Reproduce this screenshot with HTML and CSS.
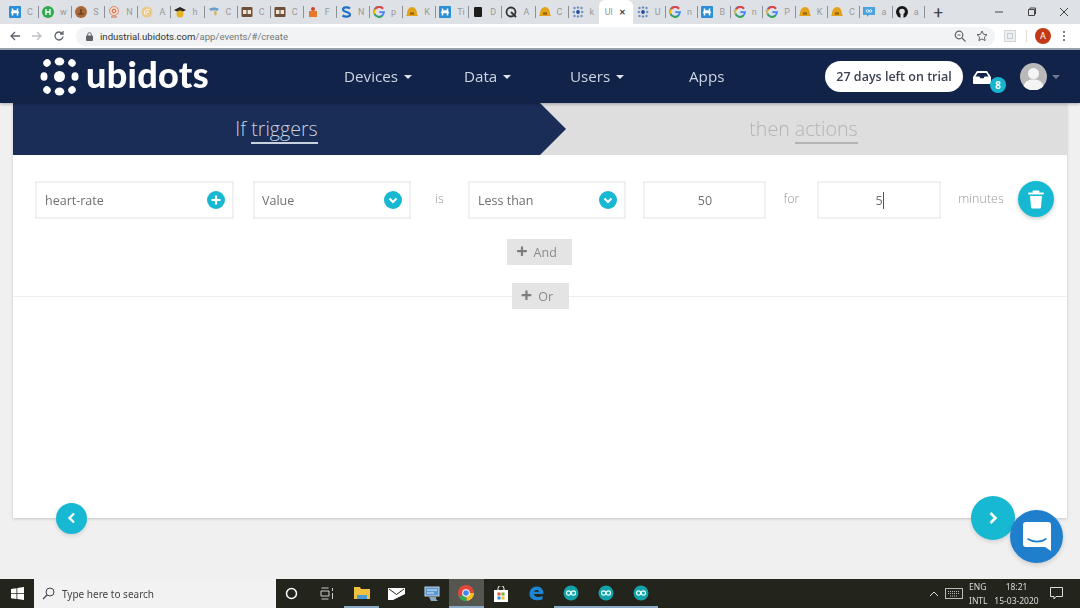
FILE: index.html
```html
<!DOCTYPE html>
<html lang="en">
<head>
<meta charset="utf-8">
<title>Ubidots</title>
<link rel="stylesheet" href="styles.css">
</head>
<body>
<svg class="defs" width="0" height="0">
  <symbol id="hack" viewBox="0 0 12 12"><rect width="12" height="12" rx="1" fill="#2b8fd6"/><path d="M3.5 2.5v7M8.5 2.5v7M2 6.5h8M3.5 5h5" stroke="#fff" stroke-width="1.5" fill="none"/></symbol>
  <symbol id="goog" viewBox="0 0 12 12"><path d="M10 2.6A5 5 0 1 0 11 6.2H6.3" fill="none" stroke="#4285f4" stroke-width="1.8"/><path d="M2.2 3.2A5 5 0 0 1 10 2.6" fill="none" stroke="#ea4335" stroke-width="1.8"/><path d="M1.6 8A5 5 0 0 1 2.2 3.2" fill="none" stroke="#fbbc05" stroke-width="1.8"/><path d="M9.4 9.8A5 5 0 0 1 1.6 8" fill="none" stroke="#34a853" stroke-width="1.8"/></symbol>
  <symbol id="cc" viewBox="0 0 12 12"><rect x=".5" y="1" width="11" height="10" rx="1" fill="#6e4f3a"/><rect x="2" y="4" width="3.4" height="4" fill="#efe6d8"/><rect x="6.6" y="4" width="3.4" height="4" fill="#efe6d8"/></symbol>
  <symbol id="hat" viewBox="0 0 12 12"><path d="M1 8c0-4 2-7 5-7s5 3 5 7l1 2H0z" fill="#e3a21a"/><path d="M4 6.5h4v2H4z" fill="#8c5a14"/></symbol>
  <symbol id="dots" viewBox="0 0 12 12"><g fill="#6f8fc0"><circle cx="2.5" cy="2" r="1.2"/><circle cx="6" cy="1.5" r="1.2"/><circle cx="9.5" cy="2" r="1.2"/><circle cx="1.8" cy="6" r="1.2"/><circle cx="10.2" cy="6" r="1.2"/><circle cx="2.5" cy="10" r="1.2"/><circle cx="6" cy="10.5" r="1.2"/><circle cx="9.5" cy="10" r="1.2"/></g><circle cx="6" cy="6" r="1.9" fill="#1f4f9e"/></symbol>
  <symbol id="ard" viewBox="0 0 16 16"><circle cx="8" cy="8" r="7.5" fill="#12a3a8"/><circle cx="5.6" cy="8" r="2.1" fill="none" stroke="#e8ffff" stroke-width="1.2"/><circle cx="10.4" cy="8" r="2.1" fill="none" stroke="#e8ffff" stroke-width="1.2"/></symbol>
</svg>

<div class="app">
  <header class="browser">
    <div class="tabs">
      <div class="tab"><svg class="fav"><use href="#hack"/></svg><span>C</span></div>
      <div class="tab"><svg class="fav" viewBox="0 0 12 12"><circle cx="6" cy="6" r="6" fill="#2fa84f"/><path d="M4 3v6M8 3v6M4 6h4" stroke="#fff" stroke-width="1.3"/></svg><span>w</span></div>
      <div class="tab"><svg class="fav" viewBox="0 0 12 12"><circle cx="6" cy="6" r="6" fill="#a8683a"/><path d="M3 8h6M6 3v5" stroke="#5a3418" stroke-width="1.2"/></svg><span>S</span></div>
      <div class="tab"><svg class="fav" viewBox="0 0 12 12"><circle cx="6" cy="5" r="4.5" fill="#f4dccb" stroke="#d98a6a"/><circle cx="6" cy="5" r="1.8" fill="none" stroke="#c9643f"/><path d="M3 11h6" stroke="#d98a6a" stroke-width="1.4"/></svg><span>N</span></div>
      <div class="tab"><svg class="fav" viewBox="0 0 12 12"><circle cx="6" cy="6" r="5.5" fill="#ecc98a"/><path d="M3.5 8.5C3 5 5 3 8.5 3.5M5.5 8.5C5 7 6 5.5 8 5.5" stroke="#fff" fill="none"/></svg><span>A</span></div>
      <div class="tab"><svg class="fav" viewBox="0 0 12 12"><path d="M6 1l6 3-6 3-6-3z" fill="#2a2a22"/><circle cx="6" cy="8" r="3.5" fill="#e6b422"/></svg><span>h</span></div>
      <div class="tab"><svg class="fav" viewBox="0 0 12 12"><path d="M1 3c3-2 7-2 10 0L9 5C7 4 5 4 3 5z" fill="#6aa0c8"/><path d="M6 5c2 0 3 1 3 3l-2 2-1-3z" fill="#d9b46a"/></svg><span>C</span></div>
      <div class="tab"><svg class="fav"><use href="#cc"/></svg><span>C</span></div>
      <div class="tab"><svg class="fav"><use href="#cc"/></svg><span>C</span></div>
      <div class="tab"><svg class="fav" viewBox="0 0 12 12"><path d="M2 5h8v6H2z" fill="#e8782a"/><circle cx="6" cy="3" r="2" fill="#d8402a"/></svg><span>F</span></div>
      <div class="tab"><svg class="fav" viewBox="0 0 12 12"><path d="M10 2.5C8 .8 3 1 3 3.6c0 3 7 1.8 7 4.9C10 11 5 11.300 2.500 9.500" fill="none" stroke="#1f6fc4" stroke-width="2.200"/></svg><span>N</span></div>
      <div class="tab"><svg class="fav"><use href="#goog"/></svg><span>p</span></div>
      <div class="tab"><svg class="fav"><use href="#hat"/></svg><span>K</span></div>
      <div class="tab"><svg class="fav"><use href="#hack"/></svg><span>Ti</span></div>
      <div class="tab"><svg class="fav" viewBox="0 0 12 12"><rect x="2" y="1" width="8" height="10" rx="1" fill="#1d1d1d"/></svg><span>D</span></div>
      <div class="tab"><svg class="fav" viewBox="0 0 12 12"><circle cx="6" cy="6" r="4.500" fill="none" stroke="#333" stroke-width="1.800"/><path d="M6 6l5 5" stroke="#333" stroke-width="1.800"/></svg><span>A</span></div>
      <div class="tab"><svg class="fav"><use href="#hat"/></svg><span>C</span></div>
      <div class="tab"><svg class="fav"><use href="#dots"/></svg><span>k</span></div>
      <div class="tab tab-active"><span>Ul</span><b>✕</b></div>
      <div class="tab tab-late tab-after"><svg class="fav"><use href="#dots"/></svg><span>U</span></div>
      <div class="tab tab-late"><svg class="fav"><use href="#goog"/></svg><span>n</span></div>
      <div class="tab tab-late"><svg class="fav"><use href="#hack"/></svg><span>B</span></div>
      <div class="tab tab-late"><svg class="fav"><use href="#goog"/></svg><span>n</span></div>
      <div class="tab tab-late"><svg class="fav"><use href="#goog"/></svg><span>P</span></div>
      <div class="tab tab-late"><svg class="fav"><use href="#hat"/></svg><span>K</span></div>
      <div class="tab tab-late"><svg class="fav"><use href="#hat"/></svg><span>C</span></div>
      <div class="tab tab-late"><svg class="fav" viewBox="0 0 12 12"><path d="M0 1h12v8H6l-2 2V9H0z" fill="#4aa3df"/><circle cx="4.500" cy="5" r="1.300" fill="none" stroke="#fff" stroke-width=".8"/><circle cx="7.500" cy="5" r="1.300" fill="none" stroke="#fff" stroke-width=".8"/></svg><span>a</span></div>
      <div class="tab tab-late"><svg class="fav" viewBox="0 0 12 12"><circle cx="6" cy="6" r="6" fill="#161616"/><circle cx="6" cy="5.500" r="2.800" fill="#dee1e6"/><path d="M4.500 8h3v4h-3z" fill="#dee1e6"/></svg><span>a</span></div>
      <div class="new-tab">+</div>
      <div class="win-controls">
        <svg width="10" height="10" viewBox="0 0 10 10"><path d="M1 5h8" stroke="#444"/></svg>
        <svg width="10" height="10" viewBox="0 0 10 10"><path d="M1.500 2.500h6v6h-6zM3 2.500V1h5.500v6H7.500" fill="none" stroke="#444"/></svg>
        <svg width="10" height="10" viewBox="0 0 10 10"><path d="M1 1l8 8M9 1l-8 8" stroke="#444"/></svg>
      </div>
    </div>
    <div class="addr">
      <div class="addr-nav">
        <svg width="12" height="12" viewBox="0 0 12 12"><path d="M11 6H2M6 2L2 6l4 4" fill="none" stroke="#5f6368" stroke-width="1.300"/></svg>
        <svg width="12" height="12" viewBox="0 0 12 12"><path d="M1 6h9M6 2l4 4-4 4" fill="none" stroke="#bcc0c4" stroke-width="1.300"/></svg>
        <svg width="12" height="12" viewBox="0 0 12 12"><path d="M10 6.500A4 4 0 1 1 9 3.300M10 1v3H7" fill="none" stroke="#5f6368" stroke-width="1.300"/></svg>
      </div>
      <div class="omnibox">
        <svg class="lock" width="7" height="9" viewBox="0 0 7 9"><rect y="3.500" width="7" height="5.500" rx="1" fill="#5f6368"/><path d="M1.700 4V2.500a1.800 1.800 0 0 1 3.600 0V4" fill="none" stroke="#5f6368"/></svg>
        <span class="url"><span class="url-host">industrial.ubidots.com</span>/app/events/#/create</span>
        <svg class="omni-ic1" width="12" height="12" viewBox="0 0 12 12"><circle cx="5" cy="5" r="3.800" fill="none" stroke="#5f6368" stroke-width="1.200"/><path d="M8 8l3.500 3.500M3.500 5h3" stroke="#5f6368" stroke-width="1.200"/></svg>
        <svg width="12" height="12" viewBox="0 0 12 12"><path d="M6 1l1.500 3.300 3.500.4-2.600 2.400.7 3.500L6 8.900l-3.100 1.700.7-3.500L1 4.700l3.500-.4z" fill="none" stroke="#5f6368"/></svg>
      </div>
      <div class="addr-ext">
        <svg width="12" height="12" viewBox="0 0 12 12"><rect x=".5" y=".5" width="11" height="11" fill="#eef0f1" stroke="#d3d6d8"/><rect x="3.500" y="3.500" width="5" height="5" fill="none" stroke="#c8cbcd"/></svg>
        <i class="addr-sep"></i>
        <span class="profile">A</span>
        <svg width="4" height="12" viewBox="0 0 4 12"><g fill="#5f6368"><circle cx="2" cy="2" r="1.100"/><circle cx="2" cy="6" r="1.100"/><circle cx="2" cy="10" r="1.100"/></g></svg>
      </div>
    </div>
  </header>

  <nav class="navbar">
    <div class="logo">
      <svg width="39" height="39" viewBox="0 0 39 39"><g fill="#fff">
        <ellipse cx="19.500" cy="19.500" rx="5.500" ry="5.500"/>
        <ellipse cx="19.500" cy="4.500" rx="4.800" ry="4"/><ellipse cx="19.500" cy="34.500" rx="4.800" ry="4"/>
        <ellipse cx="4" cy="19.500" rx="3.500" ry="4.300"/><ellipse cx="35" cy="19.500" rx="3.500" ry="4.300"/>
        <ellipse cx="7" cy="6" rx="3.800" ry="3.600" transform="rotate(-40 7 6)"/><ellipse cx="32" cy="6" rx="3.800" ry="3.600" transform="rotate(40 32 6)"/>
        <ellipse cx="7" cy="33" rx="3.800" ry="3.600" transform="rotate(40 7 33)"/><ellipse cx="32" cy="33" rx="3.800" ry="3.600" transform="rotate(-40 32 33)"/>
      </g></svg>
      <span class="logo-text">ubidots</span>
    </div>
    <ul class="nav-links">
      <li>Devices<i class="caret"></i></li>
      <li>Data<i class="caret"></i></li>
      <li>Users<i class="caret"></i></li>
      <li>Apps</li>
    </ul>
    <div class="nav-right">
      <span class="trial">27 days left on trial</span>
      <span class="inbox">
        <svg width="18" height="15" viewBox="0 0 18 15"><path d="M4 1h10l4 6v6a1 1 0 0 1-1 1H1a1 1 0 0 1-1-1V7z" fill="#fff"/><path d="M4.800 3h8.400l2.400 3.600h-4l-1 1.600H7.400l-1-1.600h-4z" fill="#12234a"/></svg>
        <span class="badge">8</span>
      </span>
      <span class="avatar"><svg width="27" height="27" viewBox="0 0 27 27"><circle cx="13.500" cy="13.500" r="13.500" fill="#b9b9b9"/><circle cx="13.500" cy="10.500" r="5.500" fill="#f4f4f4"/><path d="M3.500 23c1.500-5 5-6.500 10-6.500s8.500 1.500 10 6.500a13.500 13.500 0 0 1-20 0z" fill="#f4f4f4"/></svg></span>
      <i class="caret caret-dim"></i>
    </div>
  </nav>

  <main class="page">
    <section class="card">
      <div class="wizard">
        <div class="step step-if"><span class="step-text">If <u>triggers</u></span></div>
        <div class="step step-then"><span class="step-text">then <u>actions</u></span></div>
      </div>
      <div class="rule">
        <div class="field f-var">heart-rate<span class="round-ic"><svg width="10" height="10" viewBox="0 0 10 10"><path d="M5 .5v9M.5 5h9" stroke="#fff" stroke-width="2.200"/></svg></span></div>
        <div class="field f-val">Value<span class="round-ic"><svg width="10" height="7" viewBox="0 0 10 7"><path d="M1.500 1.500L5 5l3.500-3.500" fill="none" stroke="#fff" stroke-width="2"/></svg></span></div>
        <span class="word w-is">is</span>
        <div class="field f-op">Less than<span class="round-ic"><svg width="10" height="7" viewBox="0 0 10 7"><path d="M1.500 1.500L5 5l3.500-3.500" fill="none" stroke="#fff" stroke-width="2"/></svg></span></div>
        <div class="field f-num num">50</div>
        <span class="word w-for">for</span>
        <div class="field f-min num"><span class="typed">5</span></div>
        <span class="word w-min">minutes</span>
        <span class="trash"><svg width="16" height="19" viewBox="0 0 16 19"><path d="M5.500 1.500h5M1 3.500h14" stroke="#fff" stroke-width="2" stroke-linecap="round"/><path d="M2 6h12l-1 11a1.500 1.500 0 0 1-1.500 1.500h-7A1.500 1.500 0 0 1 3 17z" fill="#fff"/></svg></span>
      </div>
      <div class="and-row"><span class="btn-add btn-and"><b>+</b>And</span></div>
      <div class="or-row"><i class="rule-line"></i><span class="btn-add btn-or"><b>+</b>Or</span><i class="rule-line"></i></div>
    </section>
    <span class="fab fab-prev"><svg width="9" height="12" viewBox="0 0 9 12"><path d="M7 1.500L2.500 6 7 10.500" fill="none" stroke="#fff" stroke-width="2.400"/></svg></span>
    <span class="fab fab-next"><svg width="11" height="14" viewBox="0 0 11 14"><path d="M2.500 2l5 5-5 5" fill="none" stroke="#fff" stroke-width="2.600"/></svg></span>
    <span class="fab fab-chat"><svg width="28" height="29" viewBox="0 0 28 29"><path d="M3 0h22a3 3 0 0 1 3 3v26l-6-4H3a3 3 0 0 1-3-3V3a3 3 0 0 1 3-3z" fill="#fff"/><path d="M5 17c5 3.500 13 3.500 18 0" fill="none" stroke="#1f7fcc" stroke-width="1.600" stroke-linecap="round"/></svg></span>
  </main>

  <footer class="taskbar">
    <span class="start"><svg width="13" height="13" viewBox="0 0 13 13"><path d="M0 2l5.500-.8v5H0zM6.300 1L13 0v6.200H6.300zM0 7h5.500v5L0 11.200zM6.300 7H13v6l-6.700-1z" fill="#fff"/></svg></span>
    <div class="search">
      <svg width="13" height="13" viewBox="0 0 13 13"><circle cx="8" cy="5" r="4" fill="none" stroke="#444"/><path d="M5 8l-4 4" stroke="#444" stroke-width="1.200"/></svg>
      <span>Type here to search</span>
    </div>
    <div class="task-icons">
      <span class="ti"><svg width="13" height="13" viewBox="0 0 13 13"><circle cx="6.500" cy="6.500" r="5" fill="none" stroke="#fff" stroke-width="1.500"/></svg></span>
      <span class="ti"><svg width="14" height="13" viewBox="0 0 14 13"><path d="M1.500 1h7M1.500 12h7M1 4h8v5H1zM12.500 1v3M12.500 6v6" fill="none" stroke="#cfcfcf"/></svg></span>
      <span class="ti ti-run"><svg width="16" height="14" viewBox="0 0 16 14"><path d="M0 1h6l1 2h9v10H0z" fill="#f0c040"/><path d="M3 9h10v4H3z" fill="#4a9ad4"/></svg></span>
      <span class="ti"><svg width="17" height="12" viewBox="0 0 17 12"><path d="M0 0h17v12H0z" fill="#fff"/><path d="M1 1l7.500 5.500L16 1" fill="none" stroke="#23241c"/><path d="M5 12l12-6v6z" fill="#23241c"/></svg></span>
      <span class="ti"><svg width="16" height="16" viewBox="0 0 16 16"><rect x="1" y="1" width="14" height="9" fill="#5d9ad2" stroke="#c8d8e8"/><path d="M3 4h10M3 7h7" stroke="#dfeaf5"/><path d="M5 11h7v2l2 2H7z" fill="#8fa8c0"/></svg></span>
      <span class="ti ti-chrome"><svg width="16" height="16" viewBox="0 0 16 16"><circle cx="8" cy="8" r="8" fill="#e0483b"/><path d="M8 8L1 12a8 8 0 0 0 8 4z" fill="#34a853"/><path d="M8 8h8a8 8 0 0 1-7 8z" fill="#f5c02a"/><circle cx="8" cy="8" r="3.800" fill="#fff"/><circle cx="8" cy="8" r="2.800" fill="#4285f4"/></svg></span>
      <span class="ti"><svg width="14" height="16" viewBox="0 0 14 16"><path d="M4 4V2.500a3 3 0 0 1 6 0V4" fill="none" stroke="#fff"/><rect y="4" width="14" height="12" fill="#fff"/><rect x="3.500" y="6.500" width="3" height="3" fill="#e25a2c"/><rect x="7.500" y="6.500" width="3" height="3" fill="#6cb33f"/><rect x="3.500" y="10.500" width="3" height="3" fill="#2a8fd6"/><rect x="7.500" y="10.500" width="3" height="3" fill="#f5c02a"/></svg></span>
      <span class="ti"><svg width="15" height="15" viewBox="0 0 15 15"><path d="M.5 8C.5 3 4 .5 8 .5s6.500 3 6.500 7.500H5c0 3 4 4 8.500 2v3.500C8 15.500.5 14 .5 8zM5 5.800h5C10 3.500 6 3.500 5 5.800z" fill="#1b86d6"/></svg></span>
      <span class="ti ti-run"><svg width="16" height="16"><use href="#ard"/></svg></span>
      <span class="ti ti-run"><svg width="16" height="16"><use href="#ard"/></svg></span>
      <span class="ti ti-run"><svg width="16" height="16"><use href="#ard"/></svg></span>
    </div>
    <div class="tray">
      <svg width="10" height="6" viewBox="0 0 10 6"><path d="M1 5l4-4 4 4" fill="none" stroke="#ddd"/></svg>
      <svg class="kbd" width="18" height="11" viewBox="0 0 18 11"><rect x=".5" y=".5" width="17" height="10" fill="none" stroke="#bbb"/><path d="M3 3.500h12M3 5.500h12M5 8h8" stroke="#bbb" stroke-dasharray="1 1"/></svg>
      <span class="lang">ENG<br>INTL</span>
      <span class="clock">18:21<br>15-03-2020</span>
      <svg class="notif" width="13" height="13" viewBox="0 0 13 13"><path d="M.5.500h12v9H6l-2 2.500V9.500H.5z" fill="none" stroke="#ddd"/></svg>
    </div>
  </footer>
</div>
</body>
</html>
```

FILE: styles.css
```css
* { box-sizing: border-box; }
html, body { margin: 0; padding: 0; }
body { width: 1080px; height: 608px; overflow: hidden; font-family: "Open Sans", sans-serif; background: #f0f0f0; }
.defs { position: absolute; }
.app { width: 1080px; height: 608px; display: flex; flex-direction: column; filter: blur(0.5px); }

/* browser chrome */
.browser { height: 50px; flex: none; background: #fff; border-bottom: 2px solid #9aa5ad; }
.tabs { height: 24px; background: #dee1e6; display: flex; align-items: center; padding-left: 6px; font-family: Roboto, sans-serif; font-size: 9px; color: #999; }
.tab { width: 33.1px; height: 24px; flex: none; display: flex; align-items: center; padding-left: 3px; gap: 6px; position: relative; overflow: hidden; }
.tab::after { content: ""; position: absolute; right: 0; top: 6px; height: 12px; width: 1px; background: #8d9196; }
.tab-late { width: 32.4px; }
.tab-after { margin-left: 1px; }
.tab-active { width: 34px; margin-left: -3px; background: #fff; border-radius: 6px 6px 0 0; padding-left: 6px; gap: 6px; height: 24px; }
.tab-active b { color: #444; font-size: 8px; }
.tab-active::after { display: none; }
.fav { width: 12px; height: 12px; flex: none; }
.new-tab { width: 20px; margin-left: 3px; text-align: center; font-size: 17px; line-height: 24px; color: #444; flex: none; }
.win-controls { margin-left: auto; width: 86px; padding: 0 11px 0 0; display: flex; justify-content: space-between; flex: none; }

.addr { height: 24px; display: flex; align-items: center; background: #fff; }
.addr-nav { width: 76px; padding: 0 11px 0 9px; display: flex; justify-content: space-between; flex: none; }
.omnibox { width: 919px; height: 19px; background: #f1f3f4; border-radius: 10px; display: flex; align-items: center; padding: 0 7px 0 10px; gap: 10px; flex: none; }
.lock { flex: none; margin-right: -3px; }
.url { font-family: Roboto, sans-serif; font-size: 9.6px; color: #777; }
.url-host { color: #333; }
.omni-ic1 { margin-left: auto; }
.addr-ext { flex: 1; display: flex; align-items: center; padding-left: 9px; }
.addr-sep { width: 1px; height: 12px; background: #dcdcdc; margin: 0 8px 0 10px; }
.profile { width: 16px; height: 16px; border-radius: 50%; background: #c13a15; color: #fff; font: 9px Roboto, sans-serif; display: flex; align-items: center; justify-content: center; margin-right: 11px; }

/* navbar */
.navbar { height: 53px; flex: none; background: #12234a; display: flex; align-items: center; position: relative; z-index: 2; box-shadow: 0 1px 3px rgba(0,0,0,.3); }
.logo { width: 344px; padding-left: 40px; display: flex; align-items: center; gap: 7px; flex: none; height: 53px; }
.logo-text { font-family: Lato, sans-serif; font-weight: 900; font-size: 36px; color: #fff; line-height: 1; letter-spacing: .3px; margin-top: -6px; }
.nav-links { list-style: none; margin: 0; padding: 0 0 2px; display: grid; grid-template-columns: 120px 106px 119px 136px; flex: none; font-size: 15.2px; font-weight: 400; color: #cdd4e2; }
.nav-links li { display: flex; align-items: center; }
.caret { display: inline-block; width: 0; height: 0; border-left: 4px solid transparent; border-right: 4px solid transparent; border-top: 4px solid #dfe3ec; margin-left: 6px; margin-top: 2px; }
.caret-dim { border-top-color: #6f7b95; margin-left: 5px; margin-top: 0; }
.nav-right { display: flex; align-items: center; flex: none; }
.trial { width: 138px; height: 31px; border-radius: 16px; background: #fff; color: #3b4252; font-size: 12.5px; font-weight: 600; display: flex; align-items: center; justify-content: center; white-space: nowrap; }
.inbox { position: relative; margin-left: 10px; width: 18px; height: 15px; margin-top: 1px; display: block; }
.inbox svg { display: block; }
.badge { position: absolute; left: 17px; top: 7px; width: 16px; height: 16px; border-radius: 50%; background: #17b5cf; color: #fff; font-size: 10px; font-weight: 700; display: flex; align-items: center; justify-content: center; }
.avatar { margin-left: 29px; display: flex; }

/* page */
.page { flex: 1; min-height: 0; padding: 0 13px; position: relative; }
.card { height: 415px; background: #fff; box-shadow: 0 1px 3px rgba(0,0,0,.18); }
.wizard { height: 52px; background: #dedede; display: flex; }
.step { display: flex; align-items: center; justify-content: center; font-size: 19.6px; font-weight: 300; }
.step-text { line-height: 1; margin-top: 0; }
.step u { text-decoration: none; display: inline-block; border-bottom: 2px solid currentColor; padding-bottom: 3px; margin-bottom: -5px; }
.step-if { width: 553px; flex: none; margin-right: -26px; padding-right: 26px; background: #1a2d57; color: #c9d0de; clip-path: polygon(0 0, 527px 0, 553px 26px, 527px 52px, 0 52px); position: relative; z-index: 1; }
.step-then { flex: 1; color: #b4b4b4; }

.rule { display: flex; align-items: center; padding: 26px 0 0 22px; height: 64px; }
.field { height: 38px; border: 2px solid #f1f1f1; flex: none; display: flex; align-items: center; font-size: 12.5px; color: #707070; padding: 0 7px 0 8px; position: relative; }
.f-var { width: 199px; justify-content: space-between; }
.f-val { width: 158px; margin-left: 19px; padding-left: 7px; justify-content: space-between; }
.f-op { width: 158px; justify-content: space-between; }
.f-num { width: 123px; margin-left: 17px; }
.f-min { width: 124px; }
.num { justify-content: center; }
.typed { border-right: 1px solid #555; padding-right: 0; }
.round-ic { width: 18px; height: 18px; border-radius: 50%; background: #17b8d2; display: flex; align-items: center; justify-content: center; flex: none; }
.word { flex: none; text-align: center; font-size: 12.5px; font-weight: 300; color: #999; margin-top: -4px; }
.w-is { width: 57px; }
.w-for { width: 51px; }
.w-min { width: 77px; padding-left: 3px; }
.trash { width: 36px; height: 36px; border-radius: 50%; background: #17b8d2; display: flex; align-items: center; justify-content: center; flex: none; margin-top: -2px; box-shadow: 0 2px 4px rgba(0,0,0,.2); }
.and-row { display: flex; justify-content: center; padding: 20px 0 0; }
.btn-add { height: 26px; background: #e4e4e4; color: #8a8a8a; font-size: 12.5px; display: flex; align-items: center; justify-content: center; gap: 6px; padding-right: 6px; }
.btn-add b { font-size: 20px; font-weight: 700; color: #7c7c7c; line-height: 1; margin-top: -3px; }
.btn-and { width: 65px; margin-left: -1px; }
.btn-or { width: 57px; flex: none; }
.or-row { display: flex; align-items: center; margin-top: 18px; }
.rule-line { flex: 1; height: 1px; background: #eee; }

.fab { position: absolute; border-radius: 50%; display: flex; align-items: center; justify-content: center; }
.fab-prev { left: 56px; top: 399.500px; width: 31px; height: 31px; background: #17b8d2; box-shadow: 0 2px 4px rgba(0,0,0,.12); }
.fab-next { left: 971px; top: 393px; width: 44px; height: 44px; background: #17b8d2; box-shadow: 0 2px 4px rgba(0,0,0,.12); }
.fab-chat { left: 1010px; top: 407px; width: 53px; height: 53px; background: #1f7fcc; box-shadow: 0 2px 5px rgba(0,0,0,.15); }

/* taskbar */
.taskbar { height: 29px; flex: none; background: #23241c; display: flex; align-items: center; color: #ddd; }
.start { width: 34px; height: 29px; display: flex; align-items: center; justify-content: center; flex: none; }
.search { width: 242px; height: 29px; background: #f2f2f2; display: flex; align-items: center; padding-left: 8px; gap: 7px; font-family: "Noto Sans", sans-serif; font-size: 10px; color: #444; flex: none; }
.task-icons { display: flex; margin-left: -1.5px; flex: none; }
.ti { width: 34.9px; height: 29px; display: flex; align-items: center; justify-content: center; }
.ti-run { border-bottom: 2px solid #8aa9c4; }
.ti-chrome { background: #55564f; border-bottom: 2px solid #8aa9c4; }
.tray { margin-left: auto; display: flex; align-items: center; padding-right: 17px; font-family: "Noto Sans", sans-serif; font-size: 8.500px; line-height: 14px; color: #ddd; }
.kbd { margin-left: 6px; }
.lang { margin-left: 6px; width: 20px; }
.clock { text-align: center; width: 55px; margin-left: 0; }
.notif { margin-left: 6px; }
```
